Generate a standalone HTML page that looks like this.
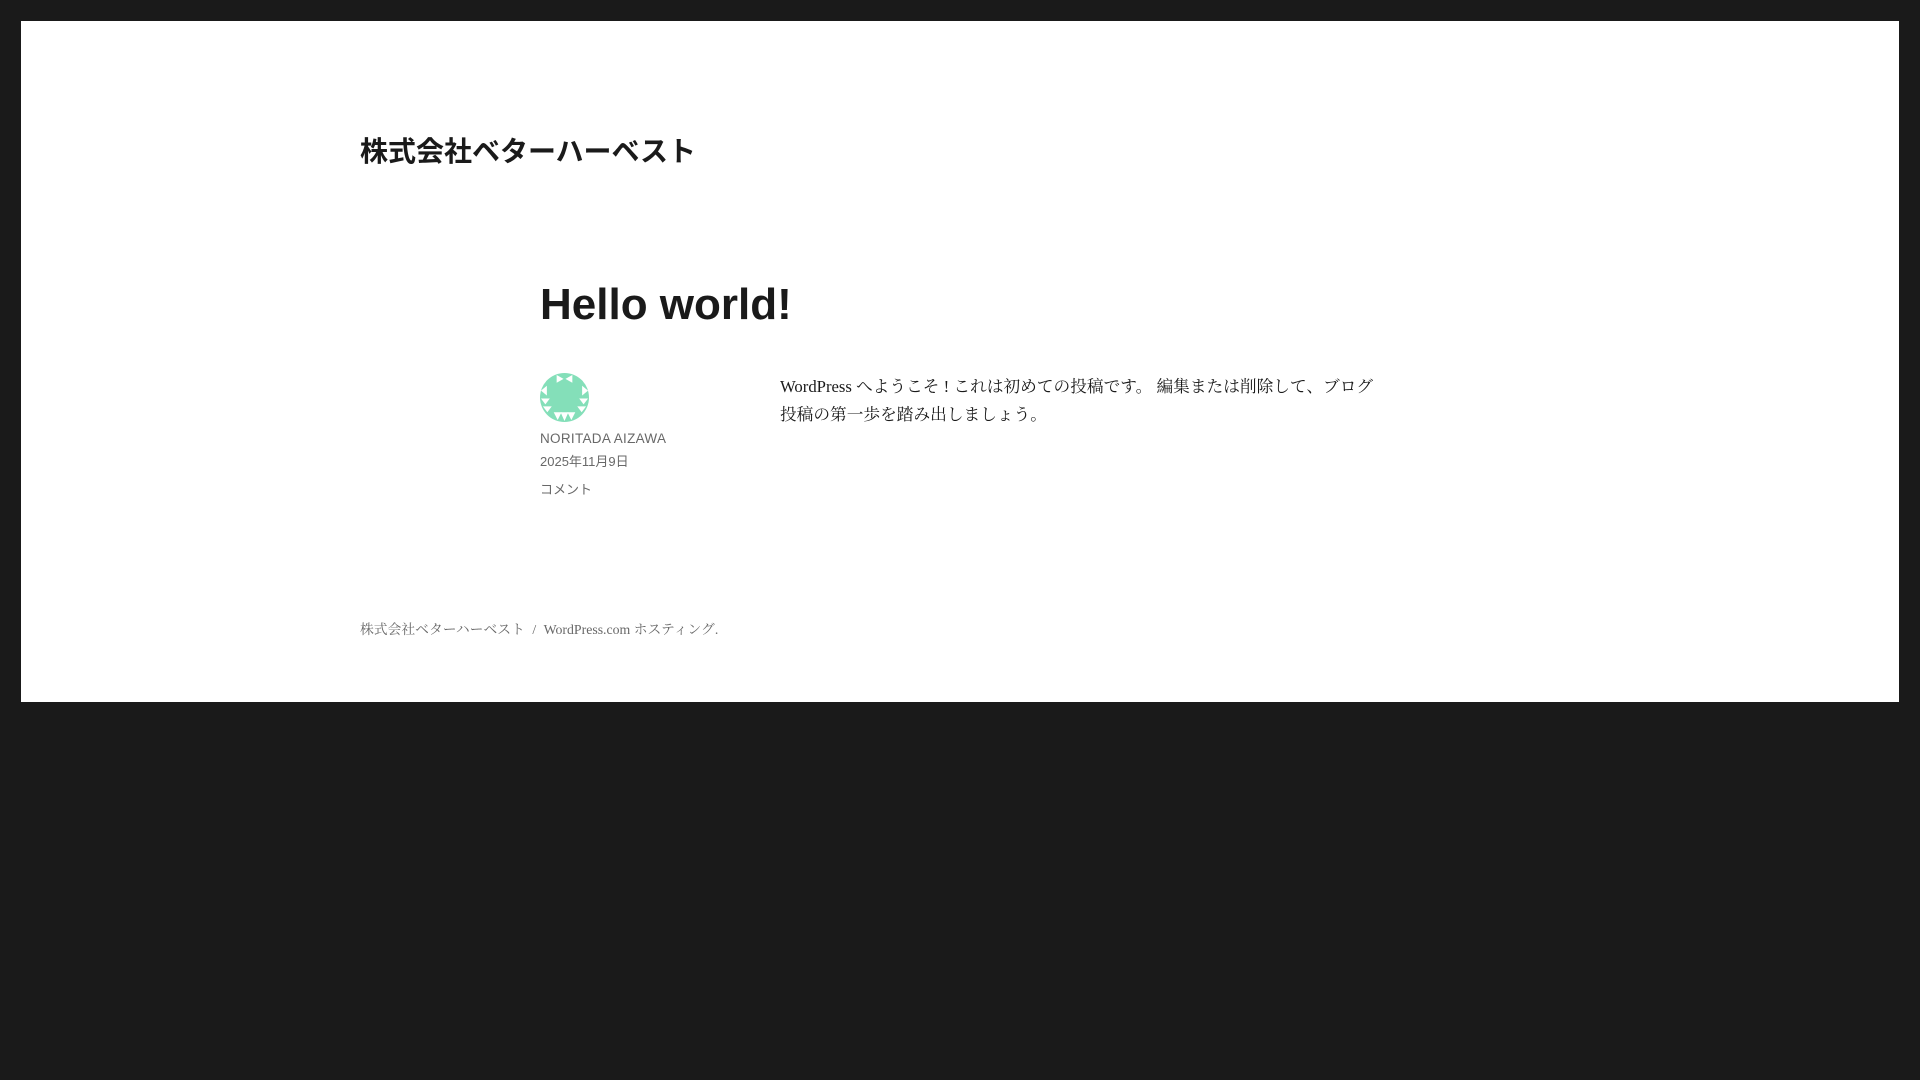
<!DOCTYPE html>
<html><head><meta charset="utf-8"><style>
html,body{margin:0;padding:0;background:#1a1a1a;width:1920px;height:1080px;overflow:hidden}
.page{position:absolute;left:21px;top:21px;width:1878px;height:681px;background:#fff}
.a{position:absolute;white-space:nowrap;color:#1a1a1a}
.sans{font-family:"Liberation Sans","Noto Sans CJK JP",sans-serif}
.serif{font-family:"Liberation Serif","Noto Serif CJK SC",serif}
</style></head><body>
<div class="page">
<div class="a sans" style="left:339px;top:109px;font-size:28px;font-weight:bold;">株式会社ベターハーベスト</div>
<div class="a sans" style="left:519px;top:259px;font-size:44px;font-weight:bold;letter-spacing:0px">Hello world!</div>
<svg class="a" style="left:519px;top:352px" width="49" height="49" viewBox="0 0 50 50">
<circle cx="25" cy="25" r="25" fill="#84dfb9"/>
<g fill="#fff">
<polygon points="17,2 24,6 17,10"/><polygon points="33,2 26,6 33,10"/>
<polygon points="1,18 7,13 7,23"/><polygon points="49,18 43,13 43,23"/>
<polygon points="1,26 10,26 5.5,32"/><polygon points="49,26 40,26 44.5,32"/>
<polygon points="3,34 12,34 7.5,40"/><polygon points="47,34 38,34 42.5,40"/>
<polygon points="14,40 22,40 18,48"/><polygon points="21,40 29,40 25,49"/><polygon points="28,40 36,40 32,48"/>
</g></svg>
<div class="a sans" style="left:519px;top:410px;font-size:13.5px;color:#686868;letter-spacing:0.3px">NORITADA AIZAWA</div>
<div class="a sans" style="left:519px;top:430px;font-size:13px;color:#686868">2025年11月9日</div>
<div class="a sans" style="left:519px;top:458px;font-size:13px;color:#686868">コメント</div>
<div class="a serif" style="left:759px;top:352px;font-size:16.7px;line-height:28px">WordPress へようこそ ! これは初めての投稿です。 編集または削除して、ブログ<br>投稿の第一歩を踏み出しましょう。</div>
<div class="a serif" style="left:339px;top:597px;font-size:13.8px;color:#686868">株式会社ベターハーベスト <span style="margin:0 4px">/</span> WordPress.com ホスティング.</div>
</div>
</body></html>
